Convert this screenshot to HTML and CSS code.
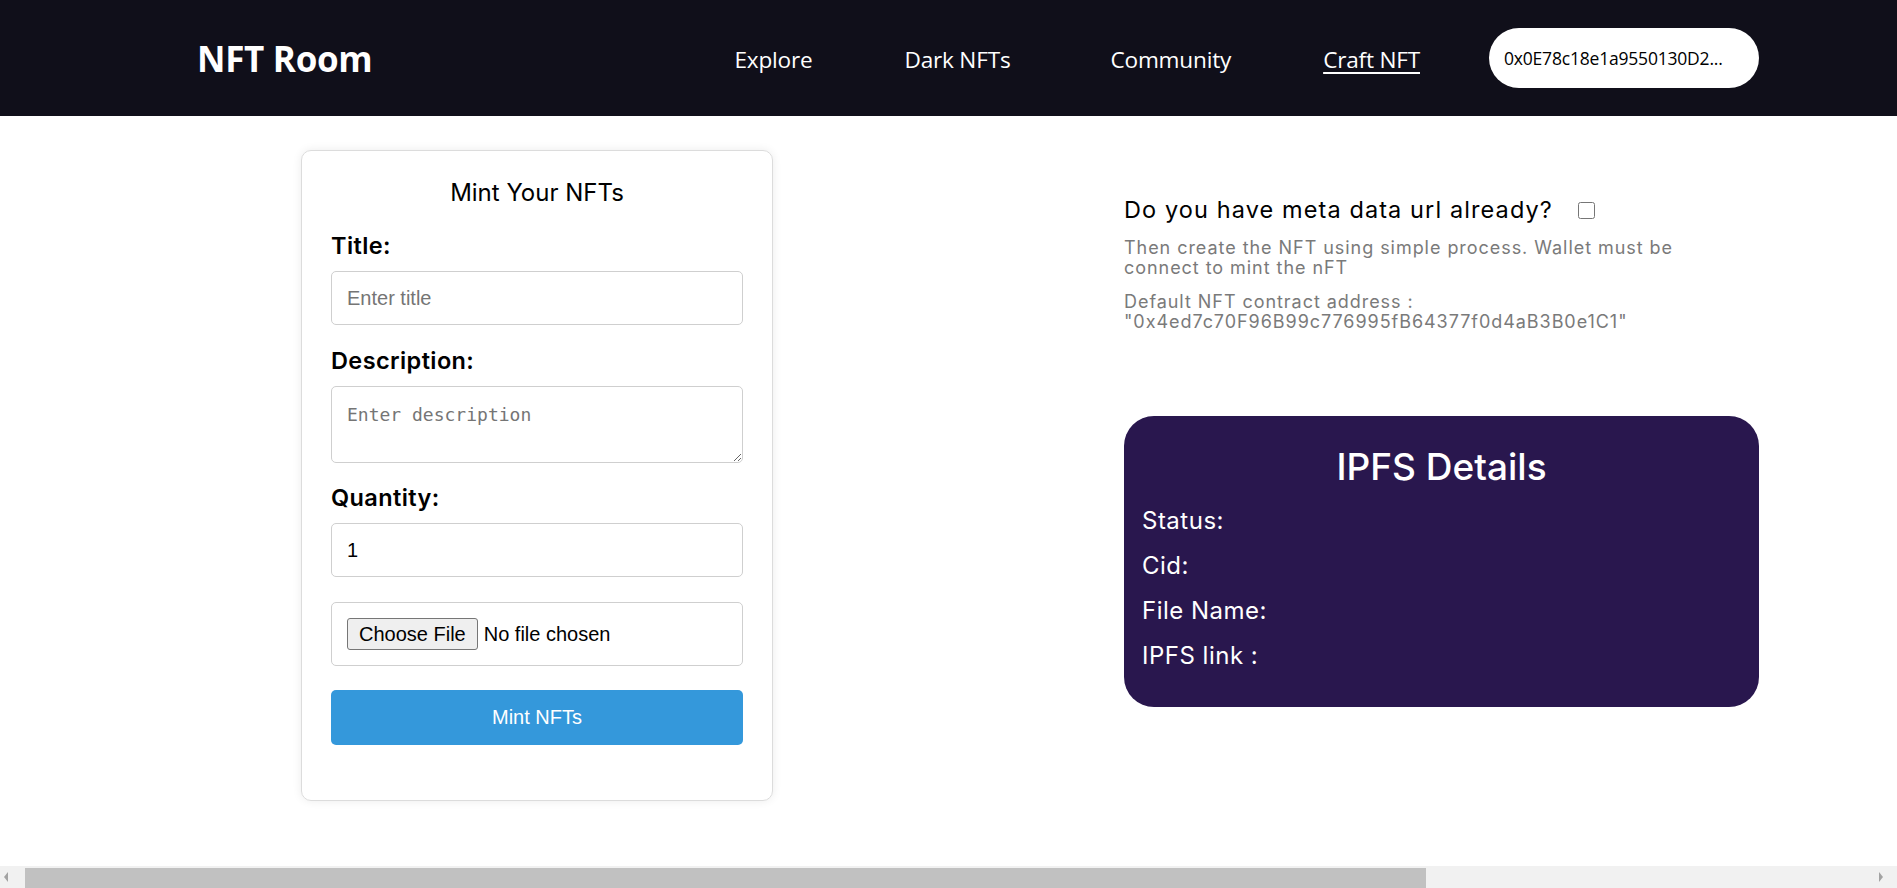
FILE: index.html
```html
<!DOCTYPE html>
<html lang="en">
<head>
<meta charset="utf-8">
<title>NFT Room - Craft NFT</title>
<link rel="stylesheet" href="styles.css">
</head>
<body>
<header class="navbar">
  <a class="brand" href="#">NFT Room</a>
  <nav class="nav-links">
    <a href="#">Explore</a>
    <a href="#">Dark NFTs</a>
    <a href="#" class="wide-gap">Community</a>
    <a href="#" class="active">Craft NFT</a>
  </nav>
  <button class="wallet" type="button">0x0E78c18e1a9550130D2...</button>
</header>

<main class="page">
  <section class="mint-card">
    <h2 class="mint-title">Mint Your NFTs</h2>
    <form class="mint-form">
      <label class="field-label" for="title">Title:</label>
      <input class="field field-input" id="title" type="text" placeholder="Enter title">

      <label class="field-label" for="desc">Description:</label>
      <textarea class="field field-textarea" id="desc" placeholder="Enter description"></textarea>

      <label class="field-label" for="qty">Quantity:</label>
      <input class="field field-input" id="qty" type="number" value="1">

      <input class="field field-file" type="file">

      <button class="mint-btn" type="button">Mint NFTs</button>
    </form>
  </section>

  <section class="info">
    <div class="meta-row">
      <span class="meta-q">Do you have meta data url already?</span>
      <input class="meta-check" type="checkbox">
    </div>
    <p class="hint">Then create the NFT using simple process. Wallet must be connect to mint the nFT</p>
    <p class="hint">Default NFT contract address : "0x4ed7c70F96B99c776995fB64377f0d4aB3B0e1C1"</p>

    <div class="ipfs">
      <h2 class="ipfs-title">IPFS Details</h2>
      <p class="ipfs-row">Status:</p>
      <p class="ipfs-row">Cid:</p>
      <p class="ipfs-row">File Name:</p>
      <p class="ipfs-row">IPFS link :</p>
    </div>
  </section>
</main>

<div class="hscroll" aria-hidden="true">
  <span class="hs-arrow hs-left"></span>
  <span class="hs-thumb"></span>
  <span class="hs-arrow hs-right"></span>
</div>
</body>
</html>
```

FILE: styles.css
```css
* { box-sizing: border-box; }

html, body {
  margin: 0;
  padding: 0;
  background: #ffffff;
}

body {
  font-family: Inter, "Open Sans", sans-serif;
  color: #000;
  height: 888px;
  overflow: hidden;
}

/* ---------- navbar ---------- */
.navbar {
  height: 116px;
  background: #100f1a;
  display: flex;
  align-items: center;
  padding: 0 138px 0 197px;
}

.brand {
  font-family: "Open Sans", sans-serif;
  font-weight: 700;
  font-size: 35px;
  letter-spacing: -0.3px;
  color: #fff;
  text-decoration: none;
  margin-top: 1px;
}

.nav-links {
  margin-left: auto;
  display: flex;
  gap: 92px;
}

.nav-links a {
  font-family: "Open Sans", sans-serif;
  font-size: 22.6px;
  color: #fff;
  text-decoration: none;
  letter-spacing: -0.2px;
  margin-top: 2px;
}

.nav-links a.wide-gap {
  margin-left: 8px;
}

.nav-links a.active {
  text-decoration: underline;
  text-underline-offset: 4px;
  text-decoration-thickness: 1.5px;
}

.wallet {
  margin-left: 69px;
  width: 270px;
  height: 60px;
  border: none;
  border-radius: 30px;
  background: #fff;
  color: #000;
  font-family: "Open Sans", sans-serif;
  font-size: 17.5px;
  text-align: left;
  padding: 0 0 0 15px;
  letter-spacing: -0.2px;
}

/* ---------- page ---------- */
.page {
  display: flex;
  justify-content: space-between;
  align-items: flex-start;
  padding: 34px 138px 0 301px;
}

/* ---------- mint card ---------- */
.mint-card {
  width: 472px;
  border: 1px solid #dcdcdc;
  border-radius: 10px;
  box-shadow: 0 0 10px rgba(0, 0, 0, 0.08);
  padding: 27px 29px 55px;
}

.mint-title {
  margin: 0 0 23px;
  font-size: 24px;
  line-height: 30px;
  font-weight: 400;
  text-align: center;
}

.mint-form {
  display: flex;
  flex-direction: column;
}

.field-label {
  display: block;
  font-size: 23.5px;
  line-height: 30px;
  font-weight: 600;
  letter-spacing: 0.4px;
  margin-bottom: 10px;
}

.field {
  display: block;
  width: 100%;
  border: 1px solid #cfcfcf;
  border-radius: 5px;
  background: #fff;
  font-family: "Liberation Sans", Arial, sans-serif;
  font-size: 20px;
  color: #000;
  padding: 0 15px;
  margin: 0 0 21px;
}

.field-input {
  height: 54px;
}

.field-input::placeholder,
.field-textarea::placeholder {
  color: #757575;
}

.field-textarea {
  height: 77px;
  padding: 17px 15px 10px;
  font-family: "DejaVu Sans Mono", "Liberation Mono", monospace;
  font-size: 18px;
  resize: vertical;
  margin-bottom: 20px;
}

.field-file {
  height: 64px;
  padding: 15px 15px;
  margin-top: 4px;
  margin-bottom: 24px;
}

.field-file::file-selector-button {
  font-family: "Liberation Sans", Arial, sans-serif;
  font-size: 20px;
  height: 32px;
  padding: 0 11px;
  margin-right: 6px;
  border: 1px solid #767676;
  border-radius: 3px;
  background: #efefef;
  color: #000;
}

.mint-btn {
  height: 55px;
  width: 100%;
  border: none;
  border-radius: 5px;
  background: #3498db;
  color: #fff;
  font-family: "Liberation Sans", Arial, sans-serif;
  font-size: 20px;
}

/* ---------- info column ---------- */
.info {
  width: 635px;
  padding-top: 46px;
}

.meta-row {
  display: flex;
  align-items: center;
  gap: 25px;
  height: 28px;
}

.meta-q {
  font-size: 23.5px;
  line-height: 28px;
  letter-spacing: 1.1px;
}

.meta-check {
  width: 17px;
  height: 17px;
  margin: 1px 0 0;
}

.hint {
  max-width: 600px;
  margin: 14px 0 0;
  font-size: 18px;
  line-height: 20px;
  letter-spacing: 0.95px;
  color: #7a7a7a;
}

.hint + .hint {
  margin-top: 14px;
}

.ipfs {
  margin-top: 84px;
  height: 291px;
  background: #29174e;
  border-radius: 30px;
  color: #fff;
  padding: 28px 18px 0;
}

.ipfs-title {
  margin: 0 0 8px;
  font-size: 37px;
  line-height: 46px;
  font-weight: 500;
  text-align: center;
}

.ipfs-row {
  margin: 0;
  font-size: 24px;
  line-height: 45px;
  letter-spacing: 0.5px;
}

/* ---------- decorative horizontal scrollbar (as in the capture) ---------- */
.hscroll {
  position: fixed;
  left: 0;
  right: 0;
  bottom: 0;
  height: 22px;
  background: #f1f1f1;
  display: flex;
  align-items: stretch;
}

.hs-thumb {
  margin-left: 13px;
  width: 1401px;
  margin-top: 2px;
  background: #c1c1c1;
}

.hs-arrow {
  width: 12px;
  display: flex;
  align-items: center;
  justify-content: center;
}

.hs-arrow::before {
  content: "";
  border-top: 5px solid transparent;
  border-bottom: 5px solid transparent;
}

.hs-left::before { border-right: 4px solid #a3a3a3; }

.hs-right {
  margin-left: auto;
  margin-right: 10px;
}

.hs-right::before { border-left: 4px solid #a3a3a3; }
```
